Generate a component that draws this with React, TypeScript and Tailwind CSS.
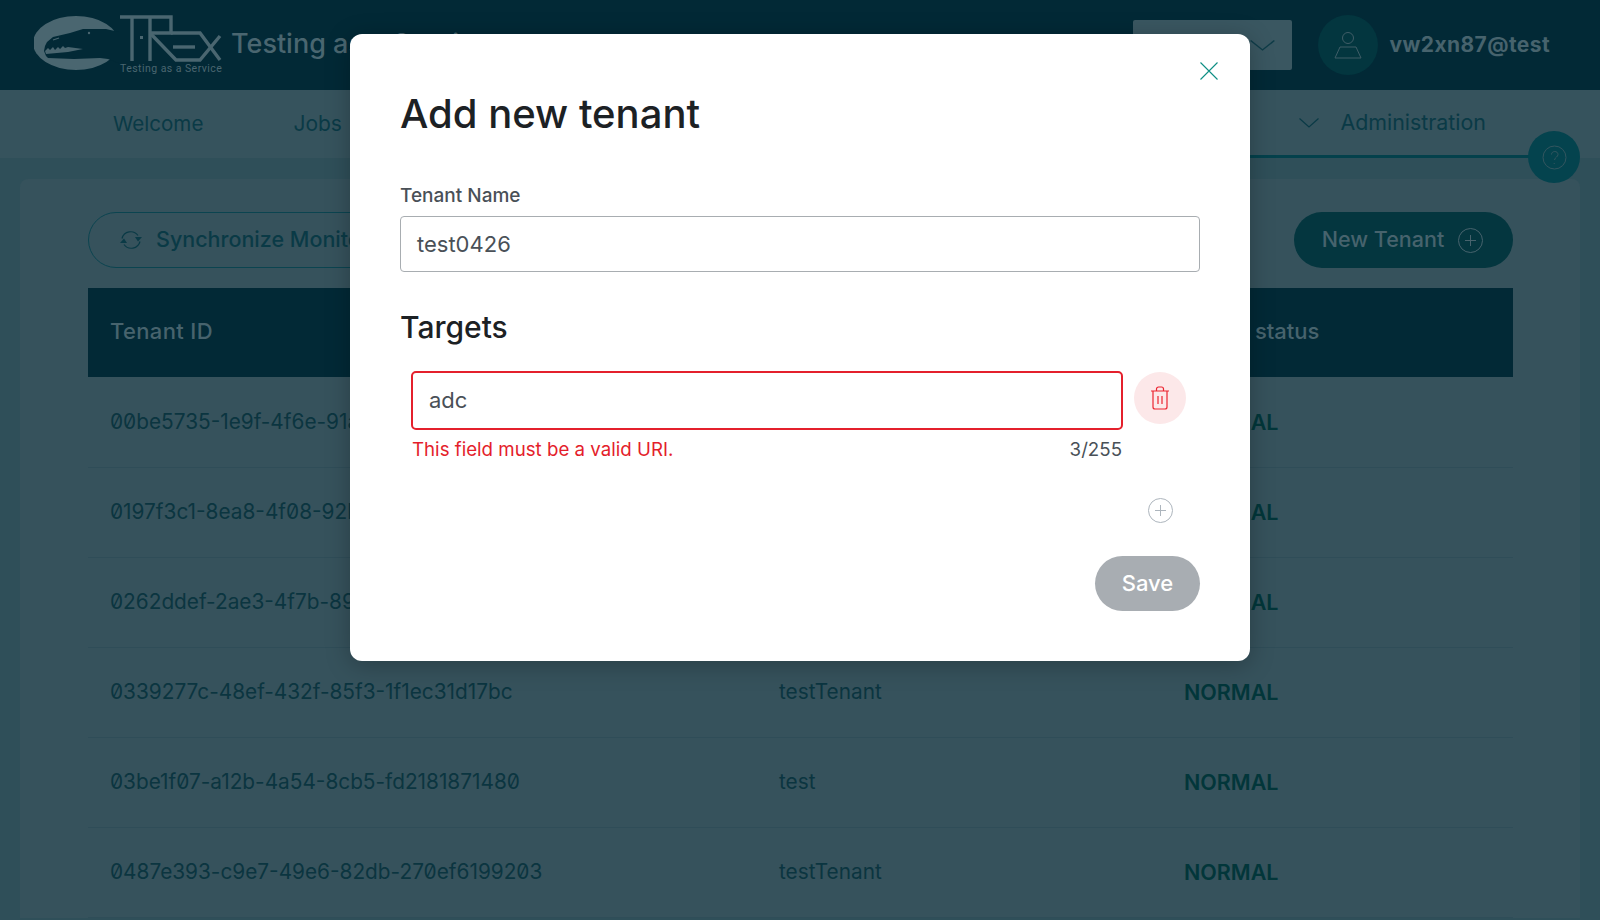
const rows = [
  { id: "00be5735-1e9f-4f6e-91a2-6c1de0b4f7a3", name: "test", status: "NORMAL" },
  { id: "0197f3c1-8ea8-4f08-92b4-1d7e65c0a9f2", name: "testTenant", status: "NORMAL" },
  { id: "0262ddef-2ae3-4f7b-89c1-3fb80e7d1c46", name: "test", status: "NORMAL" },
  { id: "0339277c-48ef-432f-85f3-1f1ec31d17bc", name: "testTenant", status: "NORMAL" },
  { id: "03be1f07-a12b-4a54-8cb5-fd2181871480", name: "test", status: "NORMAL" },
  { id: "0487e393-c9e7-49e6-82db-270ef6199203", name: "testTenant", status: "NORMAL" },
]

function Logo() {
  return (
    <svg width="192" height="62" viewBox="0 0 192 62" className="shrink-0">
      <ellipse cx="42" cy="29" rx="43" ry="27" fill="#4a6670" />
      <path d="M85 18 L72 15 L58 15 L49 15 L36 19 L19 23 L13 28 L11 32 L10 37 L12 42 L14 44 L40 45 L66 44 L74 45 L92 52 L92 18 Z" fill="#022936" />
      <path d="M11 37 L14 34 L16 36 L19 33 L21 36 L24 33 L26 35 L29 32 L31 34 L34 33 L49 35 L34 38 L12 40 Z" fill="#4a6670" />
      <circle cx="55" cy="19" r="1.2" fill="#4a6670" />
      <path d="M19 26 L25 24" stroke="#4a6670" strokeWidth="1.2" />
      <g stroke="#4a6670" strokeWidth="3.4" fill="none">
        <path d="M86 3 H137 V19 H116" />
        <path d="M98 3 V47" />
        <path d="M116 3 V47" />
        <path d="M116 19 L142 46 H166 L186 22" />
        <path d="M137 19 H166 L186 46" />
        <path d="M139 33 H161" />
      </g>
      <rect x="106" y="22" width="3" height="3" fill="#4a6670" />
      <text x="86" y="58" fill="#4a6670" fontSize="10.5" letterSpacing="0.45" fontFamily="Roboto, sans-serif">
        Testing as a Service
      </text>
    </svg>
  )
}

function Chevron({ className }: { className: string }) {
  return (
    <svg viewBox="0 0 20 10" preserveAspectRatio="none" fill="none" stroke="currentColor" strokeWidth="1.2" className={className}>
      <path d="M0.5 0.5 L10 9 L19.5 0.5" />
    </svg>
  )
}

function PlusCircle({ className }: { className: string }) {
  return (
    <svg width="25" height="25" viewBox="0 0 25 25" fill="none" stroke="currentColor" strokeWidth="1" className={className}>
      <circle cx="12.5" cy="12.5" r="12" />
      <path d="M12.5 7 V18 M7 12.5 H18" />
    </svg>
  )
}

export default function App() {
  return (
    <div className="relative h-[920px] overflow-hidden bg-[#2f4f59] font-['Inter',sans-serif]">
      <header className="flex h-[90px] items-center bg-[#022936] pl-[34px] pr-[50px]">
        <Logo />
        <span className="ml-[5px] pb-[2px] text-[27px] font-medium text-[#4a6670]">Testing as a Service</span>
        <div className="ml-auto flex h-[50px] w-[159px] items-center justify-end rounded-[2px] bg-[#3a5761] pr-[17px] text-[#0f3c48]">
          <Chevron className="h-[11px] w-[25px]" />
        </div>
        <div className="ml-[26px] flex h-[60px] w-[60px] items-center justify-center rounded-full bg-[#03363f]">
          <svg width="28" height="28" viewBox="0 0 28 28" fill="none" stroke="#3f5d67" strokeWidth="1">
            <circle cx="14" cy="7" r="5.5" />
            <path d="M6 16 H22 L27 27 H1 Z" strokeLinejoin="round" />
          </svg>
        </div>
        <span className="ml-[12px] text-[21px] font-bold tracking-[0.4px] text-[#47636d]">vw2xn87@test</span>
      </header>

      <nav className="flex h-[68px] items-stretch bg-[#36535d] pl-[113px] pr-[70px] text-[21px] text-[#0a3a46]">
        <a className="flex items-center text-[20.6px]">Welcome</a>
        <a className="ml-[90px] flex items-center">Jobs</a>
        <a className="ml-auto flex w-[280px] items-center justify-end gap-[21px] border-b-[3px] border-[#04414c] pr-[44px] text-[21.4px]">
          <Chevron className="h-[10px] w-[20px]" />
          Administration
        </a>
      </nav>

      <div className="absolute left-[1528px] top-[131px] flex h-[52px] w-[52px] items-center justify-center rounded-full bg-[#04434e]">
        <svg width="25" height="25" viewBox="0 0 25 25" fill="none" stroke="#33565f" strokeWidth="1">
          <circle cx="12.5" cy="12.5" r="11.5" />
          <path d="M9.5 9.5 C9.5 5.5 16 5.5 16 9.5 C16 12 13 12 12.5 15 M12.2 18 V19" />
        </svg>
      </div>

      <main className="mx-[20px] mt-[21px] rounded-t-[8px] bg-[#36525c] pl-[68px] pr-[67px] pt-[33px]">
        <div className="flex h-[56px] items-center justify-between">
          <button className="flex h-[56px] items-center rounded-full border border-[#0b4450] pb-[2px] pl-[30px] pr-[30px] text-[21.5px] font-medium text-[#0a3a46]">
            <svg width="24" height="22" viewBox="0 0 24 22" fill="none" stroke="currentColor" strokeWidth="1.2" className="mr-[13px] mt-[2px]">
              <path d="M3 9.5 A9 9 0 0 1 19 6.5" />
              <path d="M21 12.5 A9 9 0 0 1 5 15.5" />
              <path d="M23 8 L19 12.5 L16 8 Z M1 14 L5 9.5 L8 14 Z" fill="currentColor" stroke="none" />
            </svg>
            Synchronize Monitoring
          </button>
          <button className="flex h-[56px] w-[219px] items-center justify-center gap-[14px] rounded-full bg-[#04363f] pb-[2px] pr-[2px] text-[21.5px] font-medium text-[#47636d]">
            New Tenant
            <PlusCircle className="mt-[2px] h-[25px] w-[25px]" />
          </button>
        </div>

        <table className="mt-[20px] w-full table-fixed border-collapse text-left text-[20.8px]">
          <thead>
            <tr className="h-[89px] bg-[#022936] text-[22px] text-[#47636d]">
              <th className="w-[691px] pb-[2px] pl-[22px] font-medium tracking-[0.35px]">Tenant ID</th>
              <th className="w-[405px] pb-[2px] font-medium">Tenant Name</th>
              <th className="pb-[2px] font-medium indent-[-7px]">Tenant status</th>
            </tr>
          </thead>
          <tbody>
            {rows.map((row) => (
              <tr key={row.id} className="h-[90px] border-b border-[#2f4d58] text-[#0b3540]">
                <td className="pl-[22px] slashed-zero">{row.id}</td>
                <td>{row.name}</td>
                <td className="text-[21.5px] font-semibold text-[#02363a]">{row.status}</td>
              </tr>
            ))}
          </tbody>
        </table>
      </main>

      {/* modal */}
      <div className="absolute left-[350px] top-[34px] h-[627px] w-[900px] rounded-[12px] bg-white px-[50px] pt-[54px] shadow-[0_4px_24px_rgba(0,0,0,0.25)]">
        <svg width="18" height="18" viewBox="0 0 18 18" fill="none" stroke="#0f8f84" strokeWidth="1.1" className="absolute right-[32px] top-[28px]">
          <path d="M0.5 0.5 L17.5 17.5 M17.5 0.5 L0.5 17.5" />
        </svg>
        <h2 className="text-[40px] font-medium leading-[52px] text-[#1c2124]">Add new tenant</h2>

        <label className="mt-[44px] block text-[19px] font-medium leading-[24px] text-[#495057]">Tenant Name</label>
        <div className="mt-[8px] flex h-[56px] items-center rounded-[4px] border border-[#a8adb1] pl-[16px] text-[22px] text-[#495057]">
          test0426
        </div>

        <h3 className="mt-[35px] text-[30px] font-medium leading-[40px] text-[#1c2124]">Targets</h3>

        <div className="mt-[24px] flex items-start pl-[11px]">
          <div className="w-[712px]">
            <div className="flex h-[59px] items-center rounded-[5px] border-2 border-[#e4202c] pl-[16px] text-[22px] text-[#495057]">
              adc
            </div>
            <div className="mt-[8px] flex justify-between pl-[1px] pr-[1px] text-[18.7px] leading-[24px]">
              <span className="text-[#e41e2b]">This field must be a valid URI.</span>
              <span className="text-[#495057]">3/255</span>
            </div>
          </div>
          <button className="ml-[11px] mt-[1px] flex h-[52px] w-[52px] items-center justify-center rounded-full bg-[#fce8e9] text-[#ec2430]">
            <svg width="20" height="24" viewBox="0 0 20 24" fill="none" stroke="currentColor" strokeWidth="1.2">
              <path d="M1 5 H19 M6.5 5 V3 A2 2 0 0 1 8.5 1 H11.5 A2 2 0 0 1 13.5 3 V5" />
              <path d="M3 5 V21 A2 2 0 0 0 5 23 H15 A2 2 0 0 0 17 21 V5" />
              <path d="M8 10 V18 M12 10 V18" />
            </svg>
          </button>
        </div>

        <div className="mt-[36px] flex justify-end pr-[27.5px] text-[#adb5bd]">
          <PlusCircle className="h-[25px] w-[25px]" />
        </div>

        <div className="mt-[33px] flex justify-end">
          <button className="h-[55px] w-[105px] rounded-full bg-[#a8adb2] text-[22px] font-medium text-white">Save</button>
        </div>
      </div>
    </div>
  )
}
